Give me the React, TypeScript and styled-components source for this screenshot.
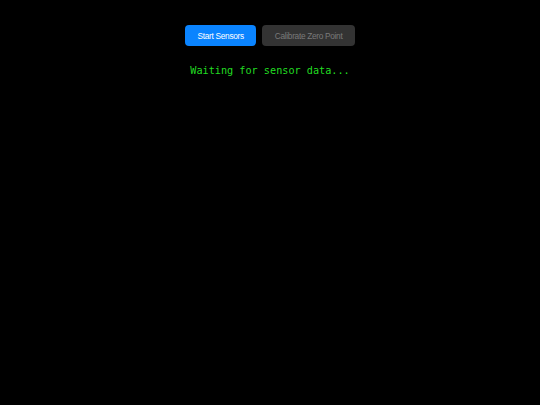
import * as React from "react"
import styled, { createGlobalStyle } from "styled-components"

const GlobalStyle = createGlobalStyle`
  html, body {
    margin: 0;
    padding: 0;
    background: #000;
  }
  #root {
    min-height: 405px;
  }
`

const Page = styled.div`
  min-height: 405px;
  background: #000;
  display: flex;
  flex-direction: column;
  align-items: center;
  padding-top: 25px;
  box-sizing: border-box;
`

const Controls = styled.div`
  display: flex;
  gap: 6px;
`

const Button = styled.button<{ $primary?: boolean }>`
  font-family: "Liberation Sans", Arial, sans-serif;
  font-size: 8.3px;
  letter-spacing: -0.31px;
  height: 21px;
  padding: 0 12.5px;
  border: none;
  border-radius: 4px;
  background: ${props => (props.$primary ? "#0a84ff" : "#333333")};
  color: ${props => (props.$primary ? "#ffffff" : "#7a7a7a")};
  cursor: pointer;
`

const Status = styled.div`
  margin-top: 19px;
  font-family: "DejaVu Sans Mono", monospace;
  font-size: 10.2px;
  color: #22dd22;
`

export default function App() {
  return (
    <>
      <GlobalStyle />
      <Page>
        <Controls>
          <Button $primary>Start Sensors</Button>
          <Button disabled>Calibrate Zero Point</Button>
        </Controls>
        <Status>Waiting for sensor data...</Status>
      </Page>
    </>
  )
}
